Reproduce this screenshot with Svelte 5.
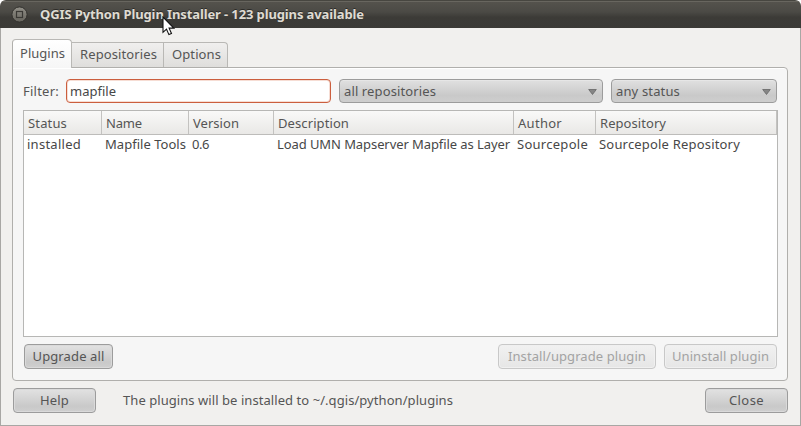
<script>
  const columns = [
    { name: 'Status', w: 39, col: 78, cell: 'installed', cw: 54 },
    { name: 'Name', w: 36, col: 87, cell: 'Mapfile Tools', cw: 81 },
    { name: 'Version', w: 46, col: 85, cell: '0.6', cw: 17 },
    { name: 'Description', w: 71, col: 240, cell: 'Load UMN Mapserver Mapfile as Layer', cw: 233 },
    { name: 'Author', w: 44, col: 82, cell: 'Sourcepole', cw: 71 },
    { name: 'Repository', w: 66, col: 181, cell: 'Sourcepole Repository', cw: 141 }
  ];

  // Tracks a label so that it fills the given width.
  function fit(node, width) {
    const natural = node.getBoundingClientRect().width;
    const n = node.textContent.length;
    const gap = (width - natural) / n;
    node.style.letterSpacing = `${gap}px`;
  }
</script>

{#snippet label(text, width)}<span class="label" use:fit={width}>{text}</span>{/snippet}

{#snippet combo(text, width)}
  <div class="combo">
    {@render label(text, width)}
    <svg width="9" height="6" viewBox="0 0 9 6"><path d="M.7.5h7.6L4.5 5.5z" fill="#858585" stroke="#666" stroke-width=".8" /></svg>
  </div>
{/snippet}

<div class="window">
  <header>
    <svg class="winbtn" width="17" height="17" viewBox="0 0 17 17">
      <defs>
        <linearGradient id="g" x1="0" y1="0" x2="0" y2="1">
          <stop offset="0" stop-color="#918f87" /><stop offset="1" stop-color="#66645d" />
        </linearGradient>
      </defs>
      <circle cx="8.5" cy="8.5" r="7.6" fill="url(#g)" stroke="#33322e" />
      <rect x="5.5" y="5.5" width="6" height="6" fill="none" stroke="#3a3935" stroke-width="1.2" />
    </svg>
    <h1>{@render label('QGIS Python Plugin Installer - 123 plugins available', 324)}</h1>
    <svg class="cursor" width="13" height="20" viewBox="0 0 13 20">
      <path d="M1 1v15.3l3.5-3.2 2.4 5.5 2.6-1.1-2.4-5.4h4.7z" fill="#fff" stroke="#111" stroke-width="1.1" />
    </svg>
  </header>

  <main>
    <nav>
      <div class="tab active">{@render label('Plugins', 45)}</div>
      <div class="tab repos">{@render label('Repositories', 77)}</div>
      <div class="tab options">{@render label('Options', 49)}</div>
    </nav>
    <section class="panel">
      <div class="filters">
        <div class="caption">{@render label('Filter:', 36)}</div>
        <div class="input">{@render label('mapfile', 46)}</div>
        {@render combo('all repositories', 92)}
        {@render combo('any status', 64)}
      </div>
      <div class="table">
        <div class="row head">
          {#each columns as c}
            <div class="th" style:width="{c.col}px">{@render label(c.name, c.w)}</div>
          {/each}
        </div>
        <div class="row">
          {#each columns as c}
            <div class="td" style:width="{c.col}px">{@render label(c.cell, c.cw)}</div>
          {/each}
        </div>
      </div>
      <div class="actions">
        <div class="button upgrade">{@render label('Upgrade all', 72)}</div>
        <div class="button disabled install">{@render label('Install/upgrade plugin', 138)}</div>
        <div class="button disabled uninstall">{@render label('Uninstall plugin', 97)}</div>
      </div>
    </section>
    <footer>
      <div class="button wide">{@render label('Help', 29)}</div>
      <div class="note">{@render label('The plugins will be installed to ~/.qgis/python/plugins', 330)}</div>
      <div class="button wide">{@render label('Close', 35)}</div>
    </footer>
  </main>
</div>

<style>
  :global(body) { background: #fff; overflow: hidden; }
  .window, .window * { box-sizing: border-box; }
  .window {
    width: 801px;
    height: 426px;
    font: 13px/18px "Noto Sans", "Open Sans", sans-serif;
    color: #555;
    background: #f1f0ee;
    border-radius: 6px 6px 0 0;
    overflow: hidden;
  }
  .label { display: inline-block; white-space: pre; }
  header {
    position: relative;
    height: 28px;
    display: flex;
    align-items: flex-start;
    padding-left: 11px;
    background: linear-gradient(#55534d, #4b4a45 40%, #3c3b37 60%, #3b3a36);
    border-top: 1px solid #474640;
    box-shadow: inset 0 1px #68665f;
  }
  .winbtn { margin-top: 5px; }
  h1 {
    margin: 4px 0 0 12px;
    font-size: 13px;
    line-height: 18px;
    font-weight: 700;
    color: #dfdbd2;
    text-shadow: 0 -1px #2c2b28;
  }
  .cursor { position: absolute; left: 162px; top: 15px; z-index: 2; }
  main {
    height: 398px;
    padding: 11px 12px 0 11px;
    border: 1px solid #a8a7a4;
    border-top: 0;
  }
  nav { display: flex; align-items: flex-end; height: 28px; }
  .tab {
    height: 25px;
    border: 1px solid #b9b8b5;
    border-left: 0;
    border-bottom: 0;
    background: linear-gradient(#f0efee, #dfdedc);
    padding-top: 2px;
  }
  .repos { width: 92px; padding-left: 8px; }
  .options { width: 64px; padding-left: 8px; border-radius: 0 4px 0 0; }
  .active {
    position: relative;
    z-index: 1;
    width: 60px;
    height: 29px;
    margin-bottom: -1px;
    padding: 4px 0 0 7px;
    border-left: 1px solid #b0afac;
    border-radius: 4px 4px 0 0;
    background: linear-gradient(#fff, #f6f6f6);
  }
  .panel {
    height: 314px;
    border: 1px solid #b0afac;
    border-radius: 0 4px 4px 4px;
    background: #f6f6f6;
    box-shadow: inset 0 1px #fff;
    padding: 11px 10px 0;
  }
  .filters { display: flex; height: 24px; }
  .caption { width: 43px; padding-top: 3px; }
  .input {
    width: 265px;
    margin-right: 8px;
    padding: 2px 0 0 3px;
    border: 1px solid #cb5e3e;
    border-radius: 4px;
    background: #fff;
    box-shadow: inset 0 0 0 1px #f6ddd4;
    color: #474747;
  }
  .combo {
    display: flex;
    align-items: center;
    justify-content: space-between;
    width: 264px;
    padding: 0 5px 1px 4px;
    border: 1px solid #9c9c9c;
    border-radius: 4px;
    background: linear-gradient(#e0e0e0, #c9c9c9 70%, #cecece);
    box-shadow: inset 0 1px #e6e6e6;
  }
  .combo svg { margin-top: 3px; }
  .combo + .combo { width: 166px; margin-left: 8px; }
  .table {
    height: 227px;
    margin-top: 7px;
    width: 755px;
    border: 1px solid #b7b7b5;
    background: #fff;
  }
  .row { display: flex; color: #474747; }
  .head {
    height: 24px;
    background: linear-gradient(#f9f9f8, #e9e8e6);
    border-bottom: 1px solid #bdbcba;
    color: #555;
  }
  .th { padding: 3px 0 0 4px; border-right: 1px solid #c3c2c0; }
  .td { padding: 0 0 0 3px; }
  .actions { display: flex; padding: 7px 0 0 1px; }
  .button {
    height: 25px;
    display: flex;
    align-items: center;
    justify-content: center;
    padding-bottom: 1px;
    border: 1px solid #9c9c9c;
    border-radius: 4px;
    background: linear-gradient(#e2e2e2, #c9c9c9 75%, #cfcfcf);
    box-shadow: inset 0 0 0 1px #dadada;
  }
  .disabled {
    color: #a3a3a3;
    border-color: #c8c8c8;
    background: linear-gradient(#f1f1f1, #e6e6e6);
    box-shadow: inset 0 0 0 1px #f0f0f0;
  }
  .upgrade { width: 89px; }
  .install { width: 158px; margin-left: auto; }
  .uninstall { width: 113px; margin-left: 8px; }
  footer { display: flex; padding: 7px 0 0 1px; }
  .wide { width: 83px; }
  .note { margin: 3px auto 0 27px; }
</style>
